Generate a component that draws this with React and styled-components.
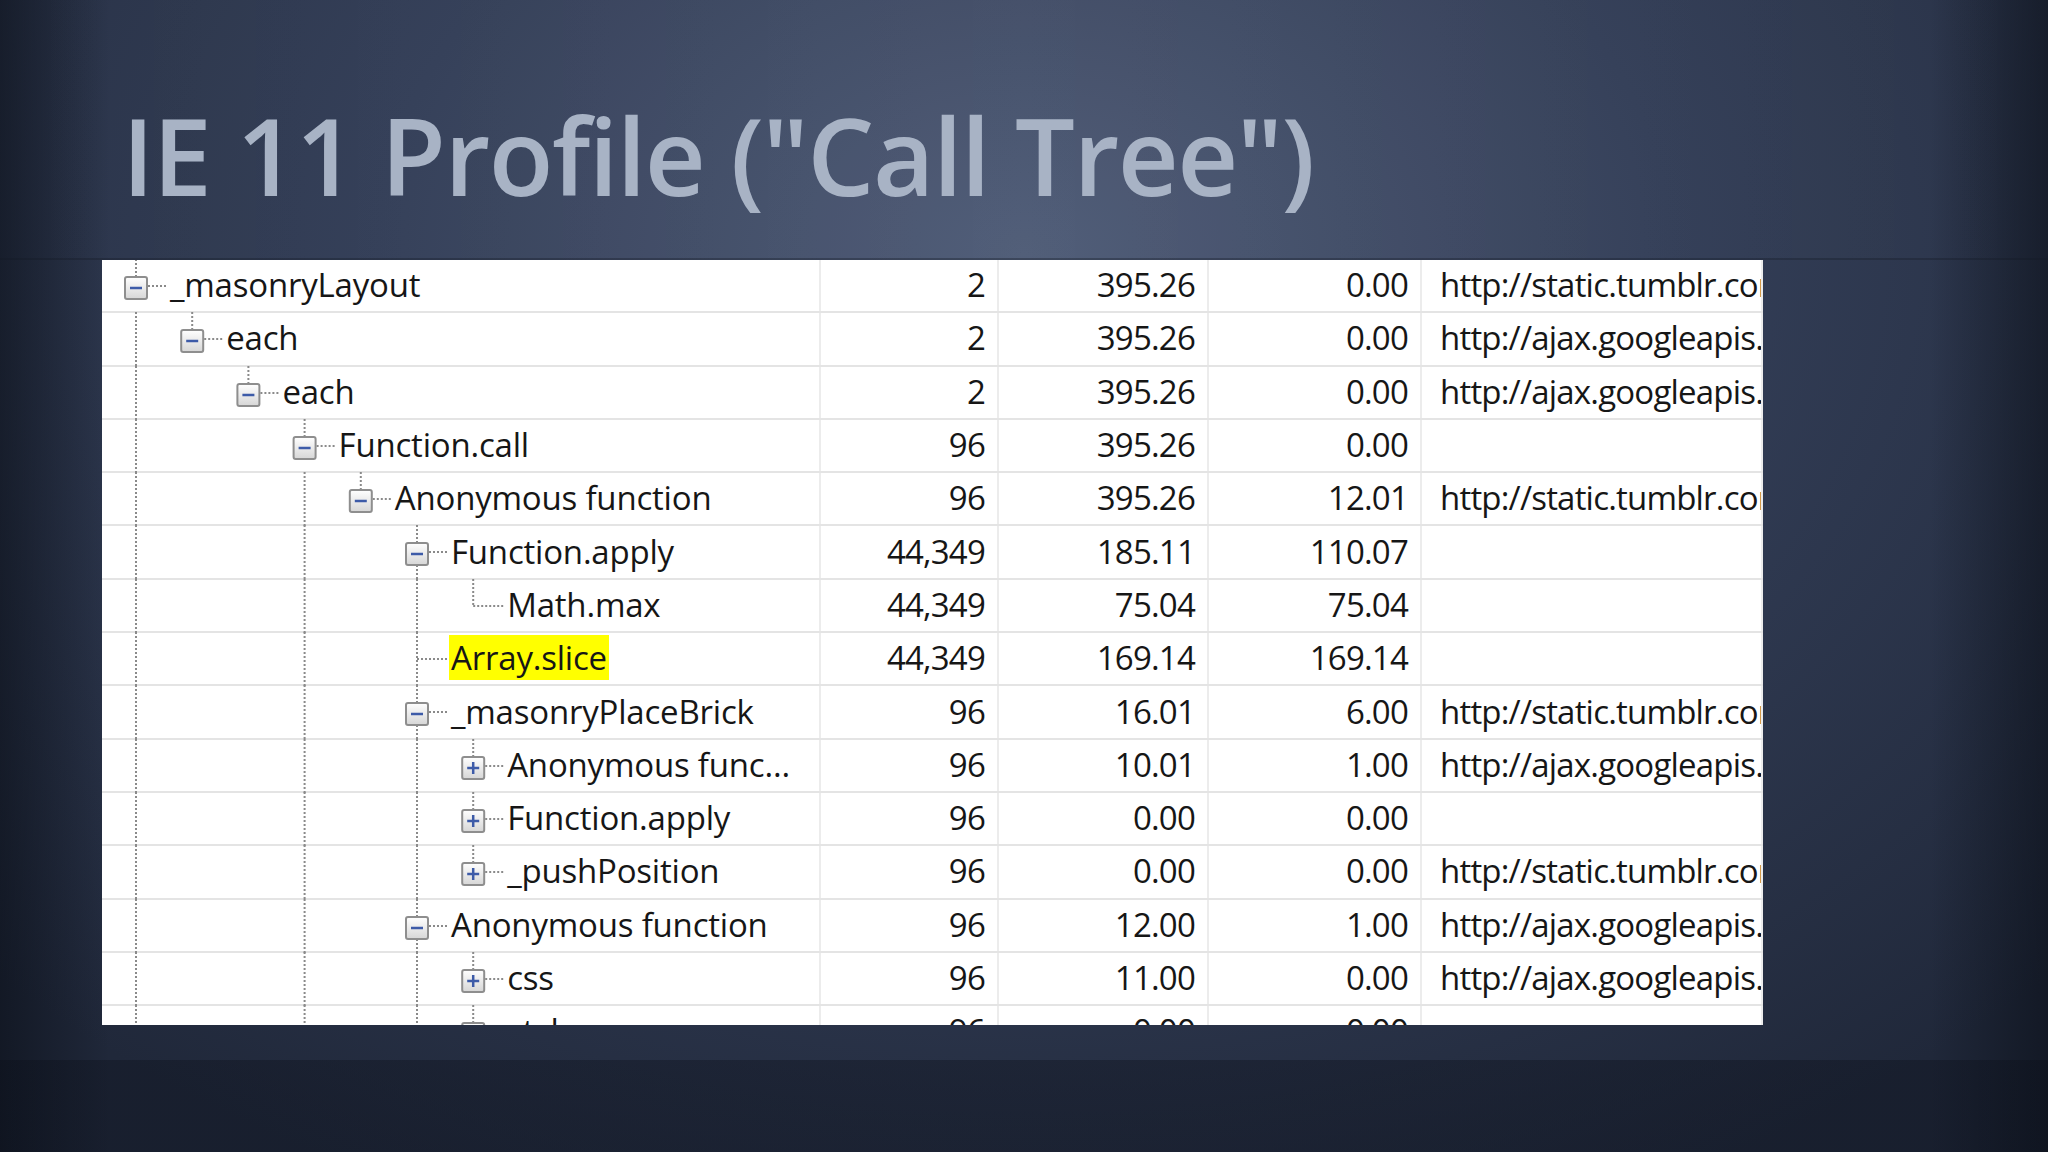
import React from "react";
import styled, { createGlobalStyle } from "styled-components";

const Global = createGlobalStyle`
  html, body { margin: 0; padding: 0; }
  body {
    width: 2048px; height: 1152px; overflow: hidden;
    background:
      linear-gradient(180deg, rgba(0,0,0,0) 0 1060px, rgba(10,14,24,0.35) 1060px),
      linear-gradient(90deg, rgba(8,12,20,0.55) 0, rgba(0,0,0,0) 110px, rgba(0,0,0,0) 1930px, rgba(8,12,20,0.55) 2048px),
      radial-gradient(ellipse 70% 90% at 50% 22%, #4b5874 0%, #333e57 45%, #20283a 100%);
    font-family: "Open Sans", "Noto Sans", sans-serif;
  }
`;

const Page = styled.div`
  display: flex;
  flex-direction: column;
  height: 1152px;
`;

const TitleBar = styled.div`
  height: 260px;
  box-sizing: border-box;
  padding: 102px 0 0 122px;
  background: linear-gradient(90deg, rgba(255,255,255,0.0), rgba(255,255,255,0.04) 50%, rgba(255,255,255,0.0));
  border-bottom: 2px solid rgba(20,26,38,0.35);
`;

const Title = styled.h1`
  margin: 0;
  font-family: "Open Sans", "Noto Sans", sans-serif;
  font-weight: 600;
  font-size: 106px;
  line-height: 1;
  letter-spacing: -1.5px;
  color: #a8b3c5;
`;

const Table = styled.div`
  margin-left: 102px;
  width: 1661px;
  height: 765px;
  overflow: hidden;
  background: #fff;
`;

const Row = styled.div`
  display: grid;
  grid-template-columns: 719px 178px 210px 213px 341px;
  height: 53.3px;
  box-sizing: border-box;
  border-bottom: 2px solid #e4e4e4;
`;

const Cell = styled.div`
  box-sizing: border-box;
  border-right: 2px solid #ececec;
  display: flex;
  align-items: center;
  justify-content: ${(p) => (p.$num ? "flex-end" : "flex-start")};
  padding: ${(p) => (p.$num ? "0 12px 2px 0" : "0 0 2px 18px")};
  font-size: 33px;
  color: #161616;
  white-space: nowrap;
  overflow: hidden;
  letter-spacing: -0.8px;
`;

const NameCell = styled.div`
  position: relative;
  box-sizing: border-box;
  border-right: 2px solid #ececec;
  display: flex;
  align-items: center;
  padding-bottom: 2px;
  font-size: 33px;
  color: #161616;
  white-space: nowrap;
  letter-spacing: -0.2px;
`;

const Lines = styled.svg`
  position: absolute;
  left: 0;
  top: -1px;
  width: 719px;
  height: 54px;
  overflow: visible;
`;

const Label = styled.span`
  position: relative;
  background: ${(p) => (p.$hl ? "#ffff00" : "transparent")};
  padding: 0 2px;
`;

const STEP = 56.2;
const X0 = 34;
const cx = (l) => X0 + l * STEP;

const rows = [
  { n: "_masonryLayout", l: 0, t: "-", g: [], v: ["2", "395.26", "0.00"], u: "http://static.tumblr.com/" },
  { n: "each", l: 1, t: "-", g: [0], v: ["2", "395.26", "0.00"], u: "http://ajax.googleapis.com/" },
  { n: "each", l: 2, t: "-", g: [0], v: ["2", "395.26", "0.00"], u: "http://ajax.googleapis.com/" },
  { n: "Function.call", l: 3, t: "-", g: [0], v: ["96", "395.26", "0.00"], u: "" },
  { n: "Anonymous function", l: 4, t: "-", g: [0, 3], v: ["96", "395.26", "12.01"], u: "http://static.tumblr.com/" },
  { n: "Function.apply", l: 5, t: "-", g: [0, 3, 5], v: ["44,349", "185.11", "110.07"], u: "" },
  { n: "Math.max", l: 6, t: "", g: [0, 3, 5], v: ["44,349", "75.04", "75.04"], u: "" },
  { n: "Array.slice", l: 5, t: "", g: [0, 3, 5], v: ["44,349", "169.14", "169.14"], u: "", hl: true },
  { n: "_masonryPlaceBrick", l: 5, t: "-", g: [0, 3, 5], v: ["96", "16.01", "6.00"], u: "http://static.tumblr.com/" },
  { n: "Anonymous func...", l: 6, t: "+", g: [0, 3, 5], v: ["96", "10.01", "1.00"], u: "http://ajax.googleapis.com/" },
  { n: "Function.apply", l: 6, t: "+", g: [0, 3, 5], v: ["96", "0.00", "0.00"], u: "" },
  { n: "_pushPosition", l: 6, t: "+", g: [0, 3, 5], v: ["96", "0.00", "0.00"], u: "http://static.tumblr.com/" },
  { n: "Anonymous function", l: 5, t: "-", g: [0, 3, 5], v: ["96", "12.00", "1.00"], u: "http://ajax.googleapis.com/" },
  { n: "css", l: 6, t: "+", g: [0, 3, 5], v: ["96", "11.00", "0.00"], u: "http://ajax.googleapis.com/" },
  { n: "style", l: 6, t: "+", g: [0, 3, 5], v: ["96", "0.00", "0.00"], u: "" },
];

const dot = { stroke: "#8a8a8a", strokeWidth: 2, strokeDasharray: "2 2" };

function Tree({ r }) {
  const x = cx(r.l);
  const mid = 27;
  return (
    <Lines viewBox="0 0 719 54">
      {r.g.map((g) => (
        <line key={g} x1={cx(g)} y1="0" x2={cx(g)} y2="54" {...dot} />
      ))}
      <line x1={x} y1="0" x2={x} y2={mid} {...dot} />
      <line x1={x} y1={mid} x2={x + 30} y2={mid} {...dot} />
      {r.t && (
        <g>
          <defs>
            <linearGradient id="bx" x1="0" y1="0" x2="0" y2="1">
              <stop offset="0" stopColor="#ffffff" />
              <stop offset="1" stopColor="#d6d6d6" />
            </linearGradient>
          </defs>
          <rect x={x - 11} y={mid - 9} width="22" height="22" rx="2" fill="url(#bx)" stroke="#8e8e8e" strokeWidth="2" />
          <line x1={x - 6} y1={mid + 2} x2={x + 6} y2={mid + 2} stroke="#3d5ba8" strokeWidth="2.5" />
          {r.t === "+" && <line x1={x} y1={mid - 4} x2={x} y2={mid + 8} stroke="#3d5ba8" strokeWidth="2.5" />}
        </g>
      )}
    </Lines>
  );
}

export default function App() {
  return (
    <Page>
      <Global />
      <TitleBar>
        <Title>IE 11 Profile ("Call Tree")</Title>
      </TitleBar>
      <Table>
        {rows.map((r, i) => (
          <Row key={i}>
            <NameCell>
              <Tree r={r} />
              <Label $hl={r.hl} style={{ marginLeft: cx(r.l) + 32 }}>{r.n}</Label>
            </NameCell>
            {r.v.map((v, j) => (
              <Cell key={j} $num>{v}</Cell>
            ))}
            <Cell>{r.u}</Cell>
          </Row>
        ))}
      </Table>
    </Page>
  );
}
